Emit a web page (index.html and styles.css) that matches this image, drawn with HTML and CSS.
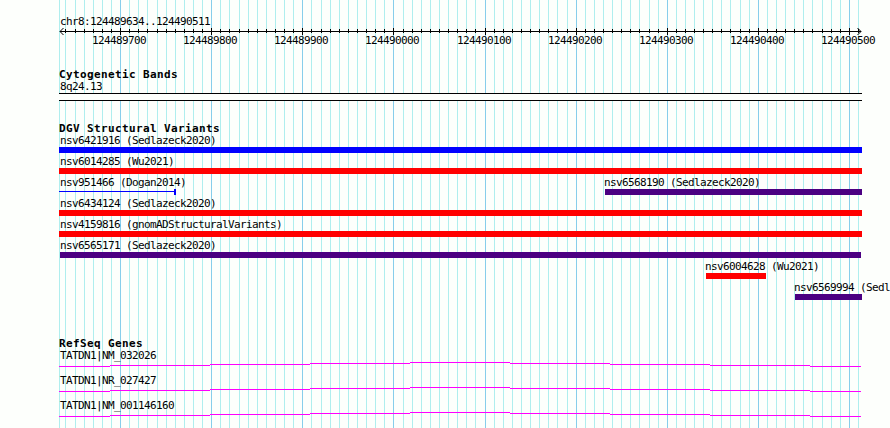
FILE: index.html
```
<!DOCTYPE html>
<html lang="en">
<head>
  <meta charset="UTF-8">
  <title>chr8:124489634..124490511</title>
  <link rel="stylesheet" href="styles.css">
</head>
<body>
<svg class="gridlines" width="890" height="428">
  <path class="minor" d=""/>
  <path class="major" d=""/>
</svg>
<div class="panel">
  <div class="range">chr8:124489634..124490511</div>
  <svg class="ruler" width="830" height="20">
    <path class="axis" d="M1 4.5H802"/>
    <path class="ticks" d=""/>
    <path class="arrow" d="M4.5 1L1 4.5L4.5 8M798.5 1L802 4.5L798.5 8"/>
  </svg>

  <div class="track cyto">
    <h2>Cytogenetic Bands</h2>
    <div class="name">8q24.13</div>
    <div class="band"></div>
  </div>

  <div class="track variants">
    <h2>DGV Structural Variants</h2>
    <div class="row"><div class="feature full blue"><span>nsv6421916 (Sedlazeck2020)</span></div></div>
    <div class="row"><div class="feature full red"><span>nsv6014285 (Wu2021)</span></div></div>
    <div class="row">
      <div class="feature line"><span>nsv951466 (Dogan2014)</span></div>
      <div class="feature indigo v6568190"><span>nsv6568190 (Sedlazeck2020)</span></div>
    </div>
    <div class="row"><div class="feature full red"><span>nsv6434124 (Sedlazeck2020)</span></div></div>
    <div class="row"><div class="feature full red"><span>nsv4159816 (gnomADStructuralVariants)</span></div></div>
    <div class="row"><div class="feature indigo v6565171"><span>nsv6565171 (Sedlazeck2020)</span></div></div>
    <div class="row"><div class="feature red v6004628"><span>nsv6004628 (Wu2021)</span></div></div>
    <div class="row"><div class="feature indigo v6569994"><span>nsv6569994 (Sedl</span></div></div>
  </div>

  <div class="track genes">
    <h2>RefSeq Genes</h2>
    <div class="gene">
      <div class="name">TATDN1|NM_032026</div>
      <svg class="intron" width="802" height="5"><path d=""/></svg>
    </div>
    <div class="gene">
      <div class="name">TATDN1|NR_027427</div>
      <svg class="intron" width="802" height="5"><path d=""/></svg>
    </div>
    <div class="gene">
      <div class="name">TATDN1|NM_001146160</div>
      <svg class="intron" width="802" height="5"><path d=""/></svg>
    </div>
  </div>
</div>

<script>
  var start = 124489634
  var left = 59
  var minor = 'M59.5 0V428'
  var major = ''
  var ticks = ''
  var ruler = document.querySelector('.ruler')

  for (var pos = 124489640; pos <= 124490510; pos += 10) {
    var x = Math.floor(60.5 + (pos - start) * 0.911) + 0.5
    var rx = x - left
    if (pos % 100 === 0) {
      major += `M${x} 0V428`
      ticks += `M${rx} 1V8`
      var label = document.createElementNS('http://www.w3.org/2000/svg', 'text')
      label.setAttribute('x', rx - 28.5)
      label.setAttribute('y', 17)
      label.textContent = pos
      ruler.appendChild(label)
    } else {
      minor += `M${x} 0V428`
      ticks += `M${rx} 2V6`
    }
  }
  document.querySelector('.minor').setAttribute('d', minor)
  document.querySelector('.major').setAttribute('d', major)
  document.querySelector('.ticks').setAttribute('d', ticks)

  // the intron line goes up one pixel per step, then back down
  var steps = [0, 51, 151, 251, 351, 451, 551, 651, 751, 802]
  var intron = ''
  for (var i = 0; i < 9; i++) {
    intron += `M${steps[i]} ${Math.abs(4 - i) + 0.5}H${steps[i + 1]}`
  }
  document.querySelectorAll('.intron path').forEach(p => p.setAttribute('d', intron))
</script>
</body>
</html>
```
FILE: styles.css
```
body {
  margin: 0;
  overflow: hidden;
  background-color: #fdfffc;
  color: #000;
  font-family: "DejaVu Sans Mono", monospace;
  font-size: 11px;
  line-height: 17px;
  letter-spacing: -0.62px;
}

.gridlines {
  position: absolute;
  top: 0;
  left: 0;
  z-index: -1;
}

path {
  fill: none;
  stroke: #000;
}

.gridlines .minor {
  stroke: #afeeee;
}

.gridlines .major {
  stroke: #87ceeb;
}

.panel {
  box-sizing: border-box;
  height: 428px;
  padding: 14px 0 0 59px;
}

.range,
.name,
.feature span {
  display: block;
  height: 15px;
  padding-left: 1px;
  white-space: nowrap;
}

.range {
  height: 13px;
  line-height: 15px;
}

.ruler {
  display: block;
}

h2 {
  margin: 0;
  height: 12px;
  font-size: 11px;
  line-height: 17px;
  letter-spacing: 0.38px;
}

.cyto {
  padding-top: 19px;
  height: 54px;
}

.cyto .band {
  box-sizing: border-box;
  width: 803px;
  height: 8px;
  border: solid #000;
  border-width: 1px 0;
  background-color: #fdfffc;
}

.row {
  display: flex;
  height: 21px;
}

.feature {
  flex: none;
  width: 803px;
}

.feature::after {
  content: "";
  display: block;
  height: 6px;
}

.blue::after {
  background-color: #00f;
}

.red::after {
  background-color: #f00;
}

.indigo::after {
  background-color: #4b0082;
}

.line {
  width: 117px;
}

.line::after {
  box-sizing: border-box;
  border-right: 2px solid #00f;
  background: linear-gradient(#00f, #00f) 0 2px / 100% 1px no-repeat;
}

.v6568190 {
  width: 257px;
  margin-left: 429px;
}

.v6565171 {
  width: 801px;
  margin-left: 1px;
}

.v6565171 span {
  padding-left: 0;
}

.v6568190 span,
.v6004628 span,
.v6569994 span {
  padding-left: 0;
  margin-left: -1px;
}

.v6004628 {
  width: 60px;
  margin-left: 647px;
}

.v6569994 {
  width: 67px;
  margin-left: 736px;
}

.genes {
  padding-top: 35px;
}

.gene {
  height: 25px;
}

.intron {
  display: block;
}

.intron path {
  stroke: #f0f;
}
```
